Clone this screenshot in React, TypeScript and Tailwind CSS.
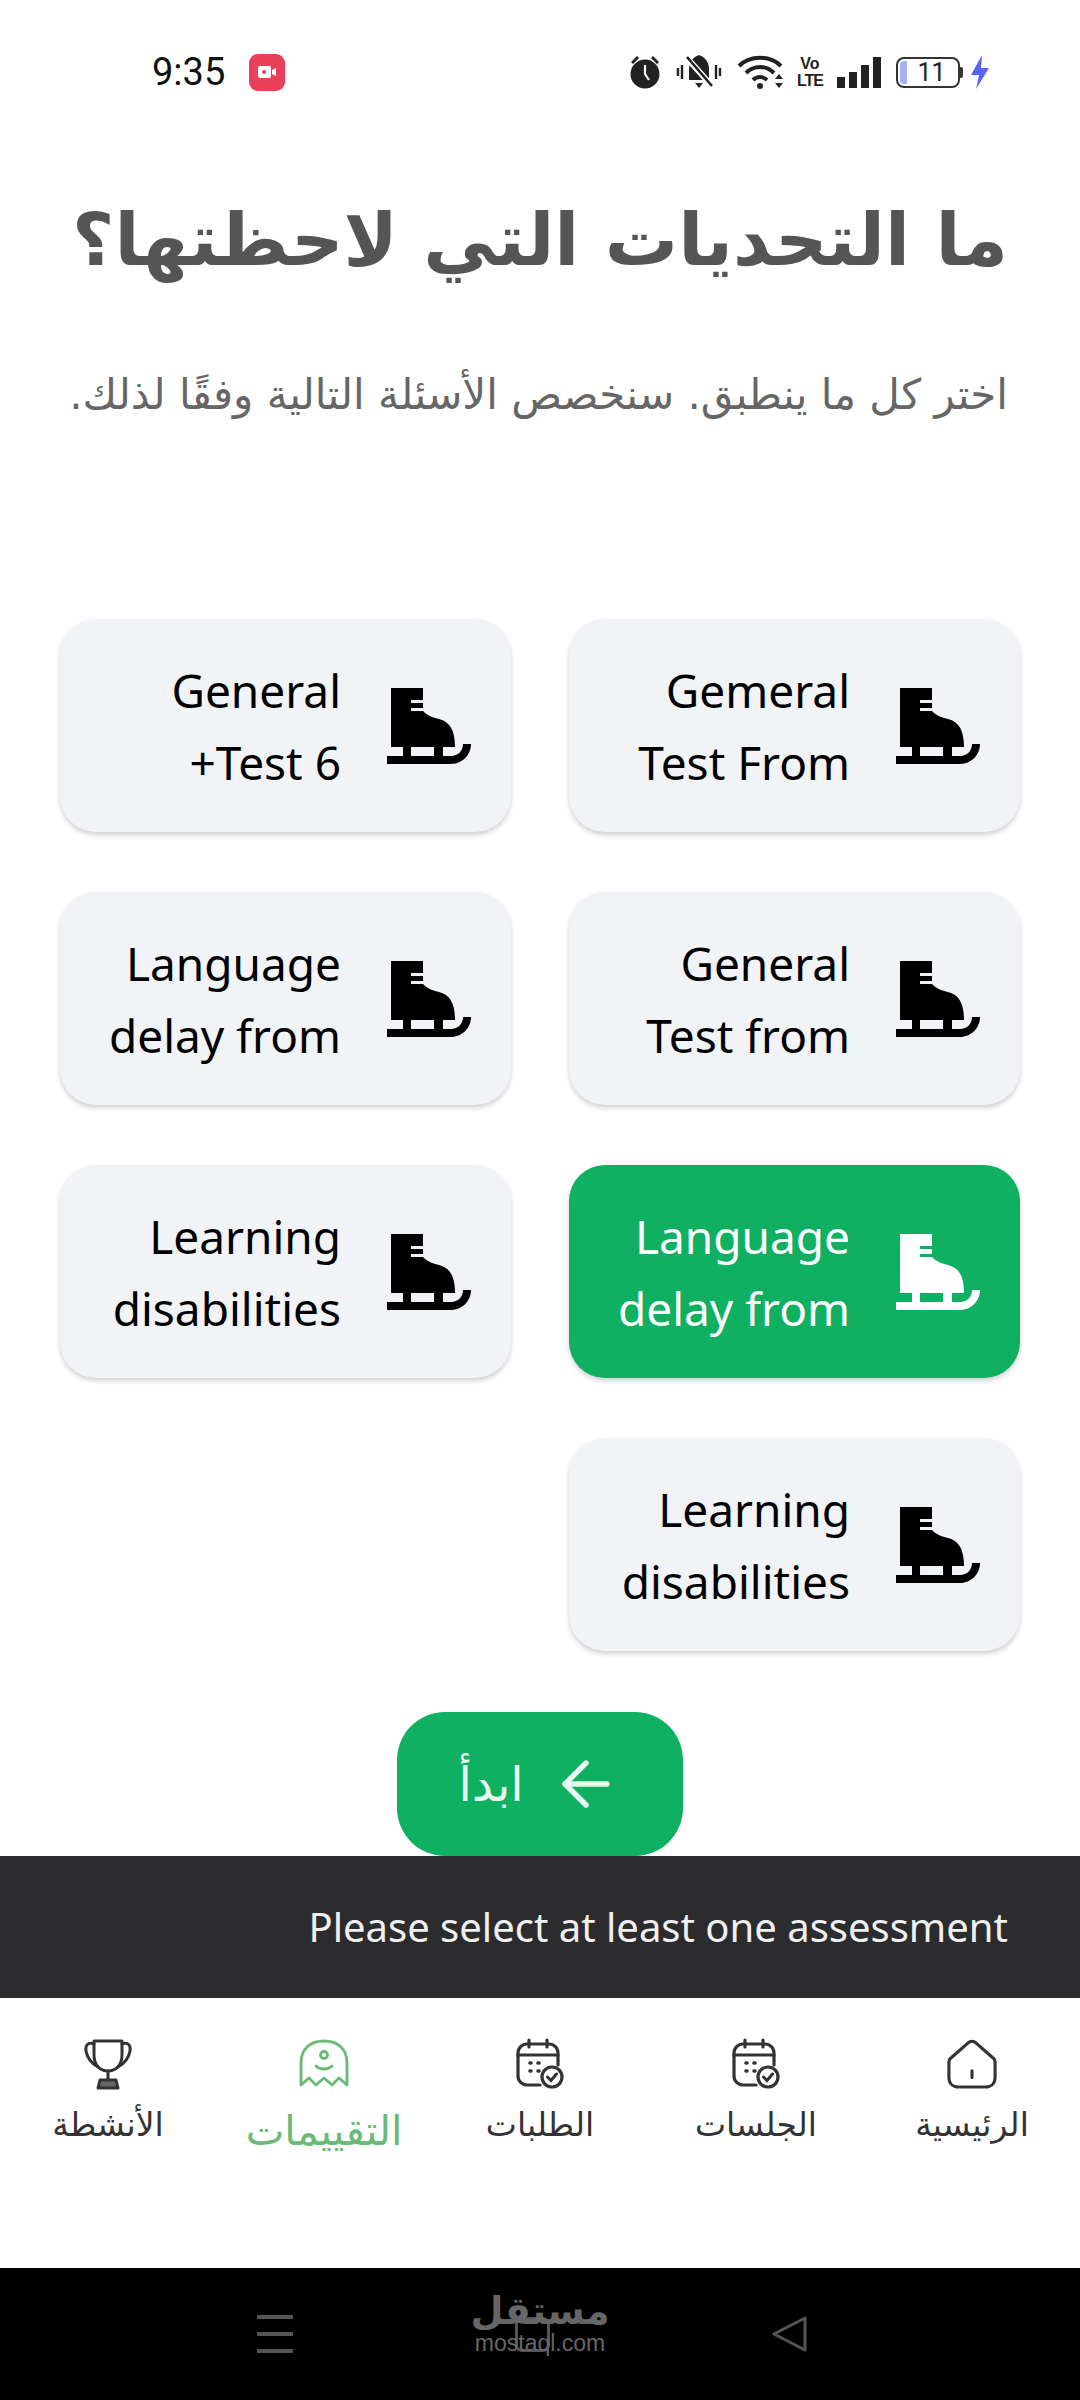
import React from 'react';
import { ArrowLeft } from 'lucide-react';

const arabic = { fontFamily: '"DejaVu Sans", "Noto Sans", sans-serif' };

function SkateIcon({ className }: { className?: string }) {
  return (
    <svg viewBox="36 30 84 76" className={className} fill="currentColor">
      <path d="M40 30H72V42H60V45H72V50H60V53H72C76 57 80 59 88 61C99 64 104 72 104 89H92V98H83V89H60V98H52V89H40Z" />
      <path d="M36 98H100C107 98 112 93 112 86H120C120 97 111 106 100 106H36Z" />
    </svg>
  );
}

function SkillCard({ lines, active }: { lines: string[]; active?: boolean }) {
  return (
    <button
      className={`flex h-[213px] w-[451px] items-center gap-[46px] rounded-[36px] pr-[40px] shadow-[0_3px_5px_rgba(0,0,0,0.18)] ${
        active ? 'bg-[#0fb062] text-white' : 'bg-[#f1f3f7] text-black'
      }`}
    >
      <SkateIcon className="h-[76px] w-[84px] shrink-0" />
      <span className="pt-[1px] text-right text-[46px] leading-[72px] whitespace-nowrap" style={{ fontFamily: '"Noto Sans", sans-serif' }}>
        {lines.map((l) => (
          <span key={l} className="block">{l}</span>
        ))}
      </span>
    </button>
  );
}

function CalendarCheck() {
  return (
    <svg viewBox="0 0 48 52" className="h-[52px] w-[48px]" fill="none" stroke="#333" strokeWidth="3.2" strokeLinecap="round">
      <path d="M13 2V9M31 2V9" />
      <path d="M24 47H11C6 47 2 43 2 38V15C2 10 6 6 11 6H33C38 6 42 10 42 15V27" />
      <path d="M2 17H42" />
      <path d="M14 25H15M22 25H23M14 33H15M22 33H23" strokeWidth="3.6" />
      <circle cx="36" cy="39" r="10" />
      <path d="M31.5 39L35 42.5L40.5 36" strokeWidth="3" />
    </svg>
  );
}

function HomeIcon() {
  return (
    <svg viewBox="0 0 52 52" className="h-[52px] w-[50px]" fill="none" stroke="#333" strokeWidth="3.2" strokeLinejoin="round" strokeLinecap="round">
      <path d="M22 4C24 2 28 2 30 4L47 19C49 20 50 22 50 24V40C50 46 46 50 40 50H12C6 50 2 46 2 40V24C2 22 3 20 5 19Z" />
      <path d="M26 33V40" />
    </svg>
  );
}

function GhostIcon() {
  return (
    <svg viewBox="0 0 50 50" className="h-[50px] w-[50px]" fill="none" stroke="#69b977" strokeWidth="2.8" strokeLinejoin="round" strokeLinecap="round">
      <path d="M2 46V24C2 10 11 2 25 2C39 2 48 10 48 24V46L40 39L33 46L25 39L17 46L10 39Z" />
      <circle cx="25" cy="16" r="3.5" />
      <path d="M17 27C21 31 29 31 33 27" />
    </svg>
  );
}

function TrophyIcon() {
  return (
    <svg viewBox="0 0 50 52" className="h-[52px] w-[50px]" fill="none" stroke="#333" strokeWidth="3" strokeLinejoin="round" strokeLinecap="round">
      <path d="M11 3H39V17C39 27 33 33 25 33C17 33 11 27 11 17Z" />
      <path d="M11 6C5 4 2 7 3 13C4 19 8 25 15 29M39 6C45 4 48 7 47 13C46 19 42 25 35 29" />
      <path d="M25 33V41" />
      <path d="M15 50L17 42H33L35 50Z" fill="#666" />
    </svg>
  );
}

function NavItem({ label, icon, active }: { label: string; icon: React.ReactNode; active?: boolean }) {
  return (
    <div className="flex flex-1 flex-col items-center">
      <div className="flex h-[52px] items-center">{icon}</div>
      <span
        className={active ? 'mt-[16px] text-[41px] leading-[50px] text-[#69b977]' : 'mt-[10px] text-[33px] leading-[50px] text-[#333]'}
        style={arabic}
      >
        {label}
      </span>
    </div>
  );
}

function StatusBar() {
  return (
    <div dir="ltr" className="flex h-[144px] items-center justify-between pr-[90px] pl-[152px]">
      <div className="flex items-center gap-[24px]">
        <span className="text-[38px] text-[#111]" style={{ fontFamily: 'Roboto, sans-serif' }}>9:35</span>
        <div className="flex h-[37px] w-[36px] items-center justify-center rounded-[9px] bg-[#e8405a]">
          <svg viewBox="0 0 20 14" className="w-[20px]" fill="#fff">
            <rect x="1" y="1" width="13" height="12" rx="2" />
            <path d="M15 5L19 3V11L15 9Z" />
            <circle cx="7" cy="7" r="2" fill="#e8405a" />
          </svg>
        </div>
      </div>
      <div className="flex items-center gap-[15px]">
        {/* alarm */}
        <svg viewBox="0 0 32 34" className="h-[34px] w-[32px]" fill="#222">
          <circle cx="16" cy="19" r="14.5" />
          <path d="M2 7L8 1L10 3L4 9ZM30 7L24 1L22 3L28 9Z" />
          <path d="M16 10V19L20 25" stroke="#fff" strokeWidth="2.2" fill="none" />
        </svg>
        {/* muted bell */}
        <svg viewBox="0 0 46 36" className="h-[36px] w-[46px]" fill="#222">
          <path d="M23 1C29 3 33 8 33 15V26H13V15C13 8 17 3 23 1Z" />
          <path d="M19 29H27L23 34Z" />
          <path d="M2 14V22M44 14V22M6 11V25M40 11V25" stroke="#222" strokeWidth="2.4" />
          <path d="M10 3L36 32" stroke="#fff" strokeWidth="6" />
          <path d="M11 3L36 32" stroke="#222" strokeWidth="2.6" />
        </svg>
        {/* wifi */}
        <svg viewBox="0 0 46 36" className="h-[36px] w-[46px]" fill="none" stroke="#222" strokeWidth="4">
          <path d="M2 12C13 1 33 1 44 12" />
          <path d="M9 19C17 11 29 11 37 19" />
          <path d="M16 26C20 22 26 22 30 26" />
          <circle cx="23" cy="32" r="3" fill="#222" stroke="none" />
          <path d="M38 25L42 20L46 25ZM38 29L42 34L46 29Z" fill="#222" stroke="none" />
        </svg>
        {/* volte */}
        <div className="flex w-[24px] flex-col items-center text-[16px] leading-[17px] font-bold text-[#222]" style={{ fontFamily: '"Liberation Sans", sans-serif' }}>
          <span>Vo</span>
          <span className="tracking-[-1px]">LTE</span>
        </div>
        {/* signal */}
        <div className="flex h-[31px] items-end gap-[4px]">
          <div className="h-[11px] w-[8px] bg-[#222]" />
          <div className="h-[16px] w-[8px] bg-[#222]" />
          <div className="h-[23px] w-[8px] bg-[#222]" />
          <div className="h-[31px] w-[8px] bg-[#222]" />
        </div>
        {/* battery */}
        <div className="flex items-center">
          <div className="flex h-[31px] w-[64px] items-center rounded-[8px] border-2 border-[#333] p-[2px]">
            <div className="h-full w-[7px] rounded-l-[4px] bg-[#a9b2f0]" />
            <span className="flex-1 text-center text-[25px] leading-none text-[#222]" style={{ fontFamily: 'Roboto, sans-serif' }}>11</span>
          </div>
          <div className="h-[11px] w-[3px] rounded-r-[2px] bg-[#333]" />
        </div>
        <svg viewBox="0 0 20 34" className="-ml-[8px] h-[34px] w-[20px]" fill="#5865f2">
          <path d="M12 0L1 20H9L6 34L19 13H11Z" />
        </svg>
      </div>
    </div>
  );
}

export default function App() {
  return (
    <div dir="rtl" className="relative flex h-[2400px] w-[1080px] flex-col overflow-hidden bg-white">
      <StatusBar />

      <div className="px-[72px]">
        <h1 className="mt-[46px] text-[73px] leading-[100px] font-bold whitespace-nowrap text-[#555]" style={arabic}>
          ما التحديات التي لاحظتها؟
        </h1>
        <p className="mt-[75px] text-[42px] leading-[60px] whitespace-nowrap text-[#666]" style={arabic}>
          اختر كل ما ينطبق. سنخصص الأسئلة التالية وفقًا لذلك.
        </p>
      </div>

      <div className="mt-[194px] grid grid-cols-[451px_451px] gap-x-[58px] gap-y-[60px] pr-[60px]">
        <SkillCard lines={['Gemeral', 'Test From']} />
        <SkillCard lines={['General', 'Test 6+']} />
        <SkillCard lines={['General', 'Test from']} />
        <SkillCard lines={['Language', 'delay from']} />
        <SkillCard lines={['Language', 'delay from']} active />
        <SkillCard lines={['Learning', 'disabilities']} />
        <SkillCard lines={['Learning', 'disabilities']} />
      </div>

      <button className="mx-auto mt-[61px] flex h-[144px] w-[286px] items-center justify-center gap-[26px] rounded-[48px] bg-[#0fb062] text-[#e8f7ef]">
        <ArrowLeft size={72} strokeWidth={1.8} />
        <span className="text-[48px]" style={arabic}>ابدأ</span>
      </button>

      <div className="flex h-[142px] items-center bg-[#2c2c2e] pr-[72px] text-[40px] text-[#f0f0f0]" style={{ fontFamily: '"Noto Sans", sans-serif' }}>
        <span dir="ltr">Please select at least one assessment</span>
      </div>

      <div className="flex flex-1 pt-[40px]">
        <NavItem label="الرئيسية" icon={<HomeIcon />} />
        <NavItem label="الجلسات" icon={<CalendarCheck />} />
        <NavItem label="الطلبات" icon={<CalendarCheck />} />
        <NavItem label="التقييمات" icon={<GhostIcon />} active />
        <NavItem label="الأنشطة" icon={<TrophyIcon />} />
      </div>

      <div dir="ltr" className="relative flex h-[132px] items-center justify-between bg-black pr-[272px] pl-[257px]">
        <div className="flex w-[36px] flex-col gap-[13px]">
          <div className="h-[4px] bg-[#555]" />
          <div className="h-[4px] bg-[#555]" />
          <div className="h-[4px] bg-[#555]" />
        </div>
        <div className="h-[35px] w-[35px] rounded-[7px] border-[3px] border-[#555]" />
        <svg viewBox="0 0 36 36" className="h-[36px] w-[36px]" fill="none" stroke="#555" strokeWidth="3" strokeLinejoin="round">
          <path d="M33 2V34L2 18Z" />
        </svg>
        {/* watermark */}
        <div className="absolute top-[22px] left-[465px] flex w-[150px] flex-col items-center text-[#666]">
          <span className="text-[38px] leading-[42px] font-bold" style={arabic}>مستقل</span>
          <span className="text-[23px] leading-[22px]" style={{ fontFamily: '"Liberation Sans", sans-serif' }}>mostaql.com</span>
        </div>
      </div>
    </div>
  );
}
